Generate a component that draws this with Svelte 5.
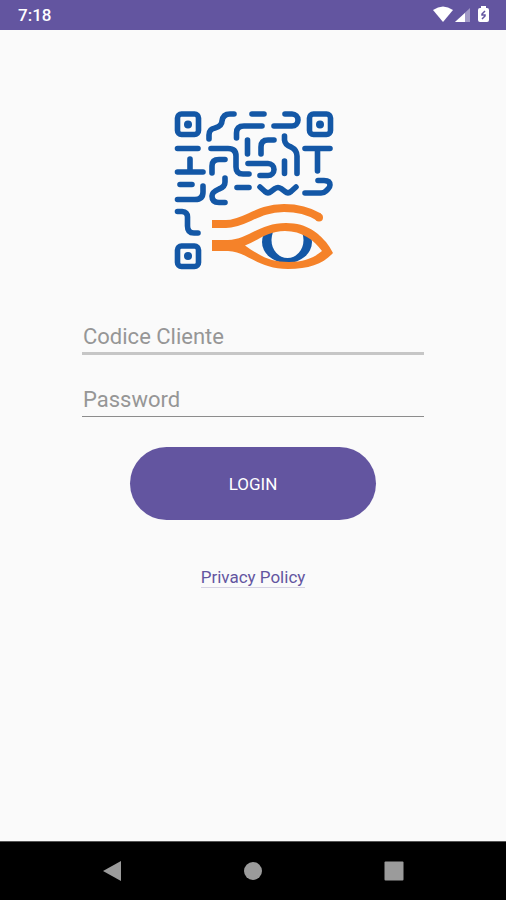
<script>
  let code = $state('');
  let password = $state('');
</script>

<div class="screen">
  <header class="status">
    <span class="time">7:18</span>
    <svg class="indicators" viewBox="0 0 58 18" aria-hidden="true">
      <path fill="#fff" d="M0 4Q10-3 20 4L10 16Z" />
      <path fill="#fff" fill-opacity=".4" d="M37 2V16H22Z" />
      <path fill="#fff" d="M32 7V16H22Z" />
      <path fill="#fff" d="M48 2V0H53V2H54Q56 2 56 4V14Q56 16 54 16H47Q45 16 45 14V4Q45 2 47 2Z" />
      <path fill="none" stroke="#6355a0" stroke-width="1.5" d="M52 5L49 8V9H52V10L49 13" />
    </svg>
  </header>

  <main>
    <svg class="logo" viewBox="0 0 170 172" role="img" aria-label="Logo">
      <g fill="none" stroke="#1357a6" stroke-width="5.6" stroke-linecap="round" stroke-linejoin="round">
        <rect x="9.5" y="10" width="21" height="20.5" rx="4" />
        <rect x="141.5" y="10" width="21" height="20.5" rx="4" />
        <rect x="9.5" y="142" width="21" height="20.5" rx="4" />
        <path d="M41 35V31Q41 25 47 24Q54 22 54 17Q55 10 62 10H66M84 10H96M68.500 34V29Q68.500 22 76 22H94M117 10H124A6 6 0 0 1 124 22H106" />
        <path d="M9.500 44.500H30M43 44.500H60Q68 44.500 68 52V63Q68 70 75 70H81M79.500 36V50M93 50V43Q93 36 100 36H106M116.500 32V36Q117 41 123 43Q129 46 129 52V69.500M116.500 57V69.500M137 44.500H162M149.500 44.500V67" />
        <path d="M22 55V68M9.500 68H35M44 69V62Q44 55.500 51 55.500H57M80 59.500H100A6 6 0 0 1 100 71.500H92" />
        <path d="M12 80.500H24M9.500 95.500H27Q35 95.500 35 88V82M57 74V78Q57 83 51 85Q44 88 44 92Q44 98.500 51 98.500H57M69 83.500H81M92 83L97 87.500Q100 90 103 87.500L107 84.500Q110 82.500 113 84.500L117 87.500Q120 90 123 87.500L128 83M150 76.500H156Q162 76.500 162 81Q162 83 160 85L158 87Q156 89 153 89H137" />
        <path d="M9.500 107.500H14Q19.500 108 19.500 113V122Q19.500 129 26 129H30" />
      </g>
      <g fill="#1357a6">
        <circle cx="20" cy="20.500" r="4" />
        <circle cx="152" cy="20.500" r="4" />
        <circle cx="20" cy="152" r="4" />
        <ellipse cx="119" cy="138" rx="25" ry="21" />
      </g>
      <ellipse cx="119.500" cy="136" rx="16" ry="18" fill="#fafafa" />
      <path fill="#fafafa" d="M90 112H150V132L117 122L90 130Z" />
      <path fill="none" stroke="#f58229" stroke-width="8" d="M44 120H58C77 120 89 104 116 104C131 104 141 107 151 113" />
      <circle cx="151" cy="113.500" r="4" fill="#f58229" />
      <path fill="#f58229" fill-rule="evenodd" d="M44 136H60C79 136 91 119 118 119C140 119 151 130 158 138Q162 143 165 149C155 160 141 165 120 165C90 165 78 147 60 147H44ZM77 141.500C92 152 102 158 121 158C137 158 147 153 154 147C146 136 134 127 117 127C100 127 91 136 77 141.500Z" />
    </svg>

    <form onsubmit={(e) => e.preventDefault()}>
      <input class="active" type="text" placeholder="Codice Cliente" aria-label="Codice Cliente" bind:value={code} />
      <input type="password" placeholder="Password" aria-label="Password" bind:value={password} />
      <button class="login" type="submit">LOGIN</button>
    </form>
    <a href="#privacy">Privacy Policy</a>
  </main>

  <nav>
    <button aria-label="Back"><svg viewBox="0 0 20 20"><path d="M1 10L19 0V20Z" /></svg></button>
    <button aria-label="Home"><svg viewBox="0 0 20 20"><circle cx="10" cy="10" r="9" /></svg></button>
    <button aria-label="Recent apps"><svg viewBox="0 0 20 20"><rect x=".5" y=".5" width="19" height="19" rx="1" /></svg></button>
  </nav>
</div>

<style>
  .screen {
    min-height: 100vh;
    display: flex;
    flex-direction: column;
    background: #fafafa;
    font-family: Roboto, sans-serif;
  }
  .status {
    box-sizing: border-box;
    height: 30px;
    padding: 0 15px 0 18px;
    display: flex;
    align-items: center;
    justify-content: space-between;
    background: #6355a0;
    color: #fff;
  }
  .time {
    font-size: 17px;
    line-height: 30px;
    font-weight: 500;
  }
  .indicators {
    width: 58px;
    height: 18px;
  }
  main {
    flex: 1;
    display: flex;
    flex-direction: column;
    align-items: center;
    padding-top: 74px;
  }
  .logo {
    width: 170px;
    height: 172px;
  }
  form {
    width: 100%;
    padding: 0 16%;
    box-sizing: border-box;
    margin-top: 44px;
    display: flex;
    flex-direction: column;
    align-items: center;
  }
  input {
    box-sizing: border-box;
    width: 100%;
    max-width: 342px;
    height: 35px;
    padding: 0 1px;
    margin: 0 0 27px;
    border: 0;
    border-bottom: 1px solid #8c8c8c;
    border-radius: 0;
    background: none;
    font: 22px/32px Roboto, sans-serif;
    color: #333;
    outline: none;
  }
  .active {
    border-bottom: 3px solid #c6c6c6;
  }
  input::placeholder {
    color: #969696;
    opacity: 1;
  }
  .login {
    width: 246px;
    height: 73px;
    margin-top: 3px;
    border: 0;
    border-radius: 37px;
    background: #6355a0;
    color: #fff;
    font: 17px/24px Roboto, sans-serif;
  }
  a {
    margin-top: 47px;
    color: #6355a0;
    font-size: 17px;
    line-height: 20px;
    text-decoration: none;
    border-bottom: 1px solid #d6d3e3;
  }
  nav {
    box-sizing: border-box;
    height: 59px;
    padding: 0 102px;
    display: flex;
    align-items: center;
    justify-content: space-between;
    background: #000;
    border-top: 1px solid #555;
  }
  nav button {
    width: 20px;
    height: 20px;
    padding: 0;
    border: 0;
    background: none;
  }
  nav svg {
    display: block;
    width: 20px;
    height: 20px;
    fill: #9b9b9b;
  }
</style>
